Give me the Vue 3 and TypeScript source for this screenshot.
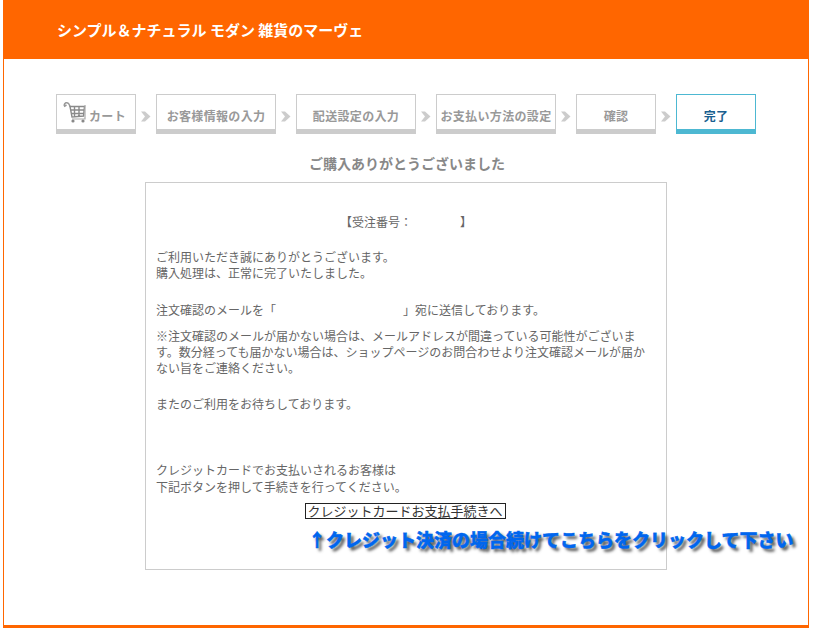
<script setup lang="ts">
interface Step { label: string; wide: boolean; cart?: boolean; active?: boolean }
const steps: Step[] = [
  { label: 'カート', wide: false, cart: true },
  { label: 'お客様情報の入力', wide: true },
  { label: '配送設定の入力', wide: true },
  { label: 'お支払い方法の設定', wide: true },
  { label: '確認', wide: false },
  { label: '完了', wide: false, active: true },
]
</script>

<template>
  <div class="page">
    <header class="head"><h1>シンプル＆ナチュラル モダン 雑貨のマーヴェ</h1></header>
    <main class="main">
      <ol class="steps">
        <template v-for="(s, i) in steps" :key="s.label">
          <li class="step" :class="{ wide: s.wide, active: s.active, hascart: s.cart }">
            <svg v-if="s.cart" class="cart" viewBox="0 0 24 22" width="24" height="22" aria-hidden="true">
              <path d="M1 4.500C1.500 1.500 4 1 5.500 2.500L7.500 6M1 5.500L3.500 4" fill="none" stroke="#999" stroke-width="1.500"/>
              <path d="M7 5.500H21.500L20.500 15L9 16L7 5.500ZM7.500 9H21M8.500 12.500H20.500M11.500 5.500V15.500M16 5.500V15" fill="none" stroke="#8a8a8a" stroke-width="1.400"/>
              <path d="M22 4V18H9" fill="none" stroke="#aaa" stroke-width="1.200"/>
              <circle cx="10" cy="20" r="1.600" fill="#888"/>
              <circle cx="20" cy="20" r="1.600" fill="#888"/>
            </svg>
            <span>{{ s.label }}</span>
          </li>
          <li v-if="i < steps.length - 1" class="sep" aria-hidden="true">
            <svg viewBox="0 0 10 11" width="10" height="11">
              <path d="M0 0.500H4L9.500 5.500L4 10.500H0L4 5.500Z" fill="#ccc"/>
            </svg>
          </li>
        </template>
      </ol>

      <h2 class="title">ご購入ありがとうございました</h2>

      <section class="box">
        <p class="order">【受注番号：<span class="blank"></span>】</p>
        <p class="thanks">ご利用いただき誠にありがとうございます。<br>購入処理は、正常に完了いたしました。</p>
        <p class="mail">注文確認のメールを「<span class="blankmail"></span>」宛に送信しております。</p>
        <p class="note">※注文確認のメールが届かない場合は、メールアドレスが間違っている可能性がございます。数分経っても届かない場合は、ショップページのお問合わせより注文確認メールが届かない旨をご連絡ください。</p>
        <p class="again">またのご利用をお待ちしております。</p>
        <p class="credit">クレジットカードでお支払いされるお客様は<br>下記ボタンを押して手続きを行ってください。</p>
        <div class="btnrow"><button type="button" class="btn">クレジットカードお支払手続きへ</button></div>
        <p class="arrow">↑クレジット決済の場合続けてこちらをクリックして下さい</p>
      </section>
    </main>
  </div>
</template>

<style>
html, body { margin: 0; background: #fff; }
</style>

<style scoped>
.page {
  box-sizing: border-box;
  width: 806px;
  height: 628px;
  margin-left: 3px;
  border-right: 1px solid #f60;
  border-left: 1px solid #f60;
  border-bottom: 3px solid #f60;
  font-family: "Noto Sans CJK JP", "Liberation Sans", sans-serif;
  color: #666;
  font-size: 12px;
}
.head {
  height: 59px;
  margin: 0 -1px;
  background: #f60;
  display: flex;
  align-items: center;
  padding-left: 54px;
}
.head h1 { margin: 0; color: #fff; font-size: 15px; font-weight: 700; line-height: 20px; }
.main { padding: 35px 0 0 52px; }
.steps {
  list-style: none; margin: 0; padding: 0;
  display: flex;
  height: 40px;
}
.step {
  box-sizing: border-box;
  width: 80px;
  height: 40px;
  border: 1px solid #ccc;
  border-bottom-width: 5px;
  padding-top: 7px;
  display: flex;
  align-items: center;
  justify-content: center;
  color: #999;
  font-size: 12px;
  font-weight: 700;
  letter-spacing: 0.33px;
  white-space: nowrap;
}
.step.wide { width: 120px; }
.step.active { border-color: #4db8d2; color: #1a5f8f; }
.step.hascart { justify-content: flex-start; padding-top: 0; padding-left: 6px; gap: 2px; }
.step.hascart span { padding-top: 7px; }
.cart { flex: none; margin-top: 0; }
.sep { width: 20px; display: flex; align-items: center; justify-content: center; height: 44px; }
.title {
  margin: 19px 0 0 -52px;
  width: 806px;
  text-align: center;
  font-size: 14px;
  line-height: 20px;
  font-weight: 700;
  color: #888;
}
.box {
  box-sizing: border-box;
  width: 522px;
  height: 388px;
  margin: 9px 0 0 89px;
  border: 1px solid #ccc;
  padding: 29px 10px 0;
  line-height: 16px;
}
p { margin: 0; }
.order { text-align: center; line-height: 20px; }
.blank { display: inline-block; width: 48px; }
.thanks { margin-top: 17px; }
.mail { margin-top: 19px; line-height: 20px; }
.blankmail { display: inline-block; width: 127px; }
.note { margin-top: 8px; }
.again { margin-top: 20px; }
.credit { margin-top: 49px; line-height: 17px; }
.btnrow { display: flex; justify-content: center; margin-top: 8px; }
.btn {
  box-sizing: border-box;
  width: 201px;
  height: 16px;
  margin-left: -2px;
  padding: 0;
  background: #fff;
  border: 1px solid #222;
  border-radius: 0;
  font: 13px/14px "Noto Sans CJK JP", sans-serif;
  color: #333;
  white-space: nowrap;
}
.arrow {
  margin: 8px 0 0 152px;
  font-size: 18px;
  line-height: 24px;
  font-weight: 900;
  color: #06e;
  white-space: nowrap;
  -webkit-text-stroke: 0.4px #06e;
  text-shadow: 3px 3px 3px #555;
}
</style>
